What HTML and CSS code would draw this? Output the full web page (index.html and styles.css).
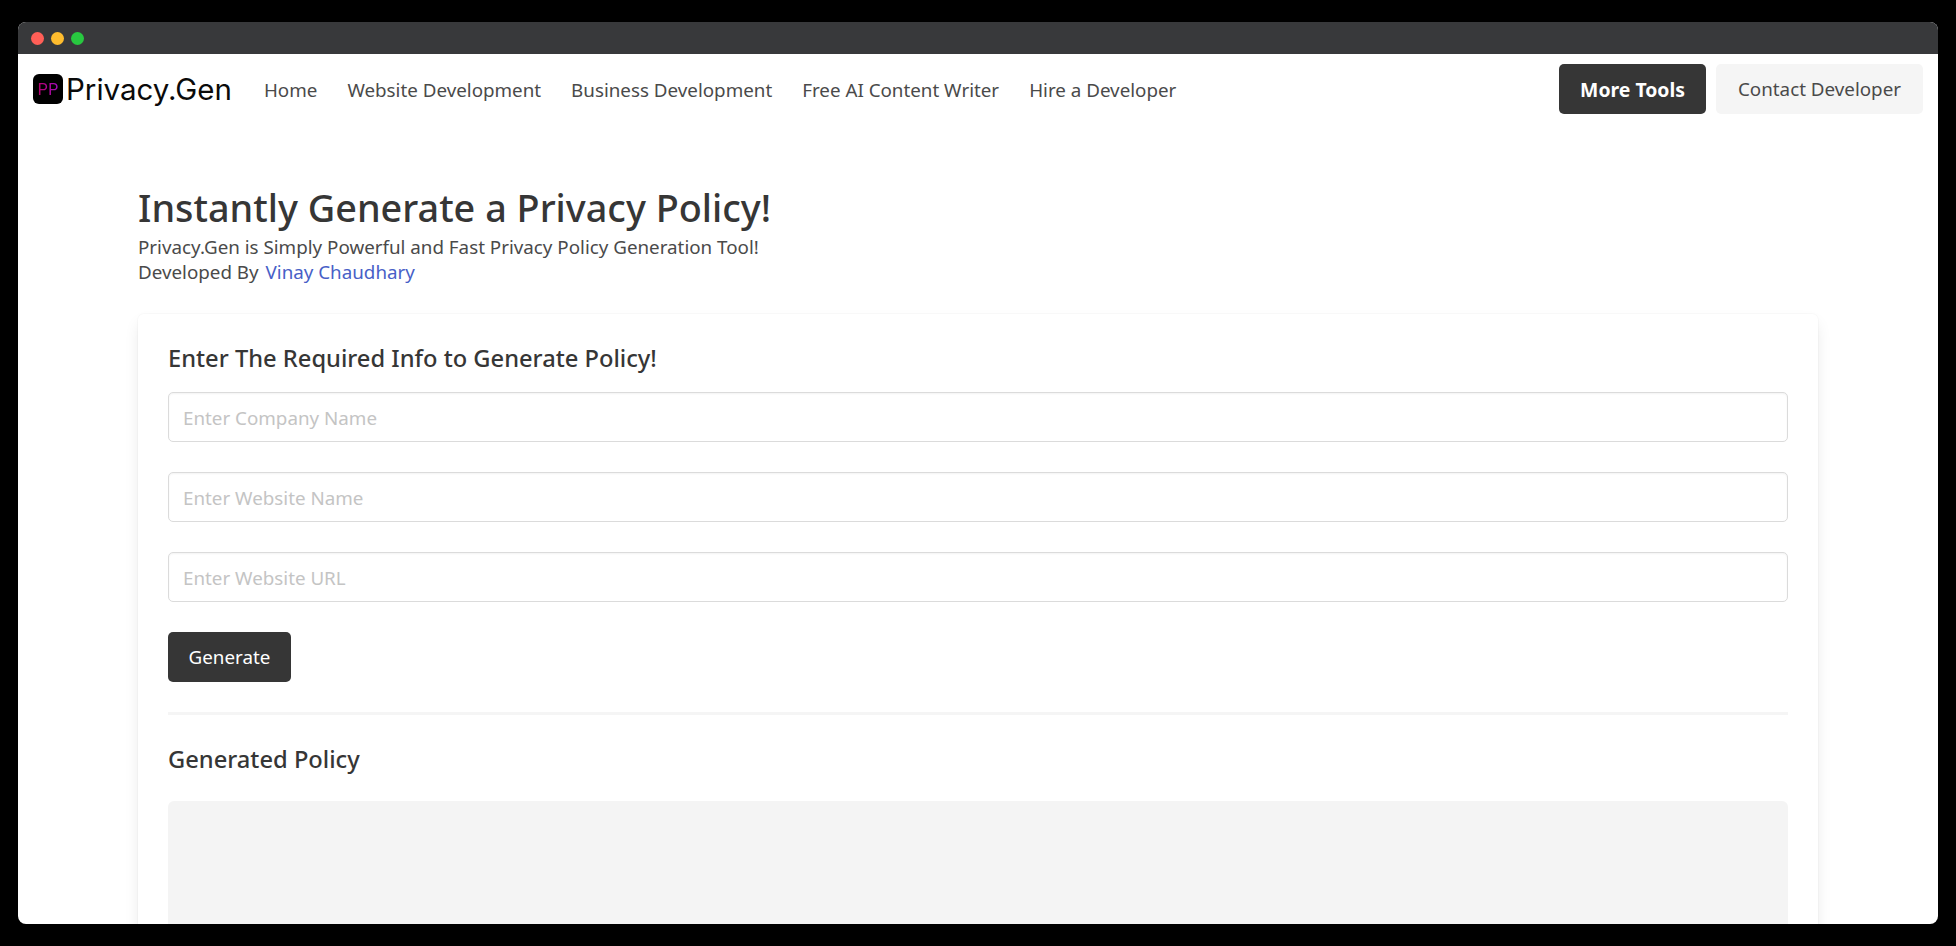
FILE: index.html
```html
<!DOCTYPE html>
<html lang="en">
<head>
<meta charset="utf-8">
<title>Privacy.Gen</title>
<link rel="stylesheet" href="styles.css">
</head>
<body>
<div class="window">
  <div class="titlebar">
    <span class="dot dot-red"></span><span class="dot dot-yellow"></span><span class="dot dot-green"></span>
  </div>
  <div class="page">
    <nav class="navbar">
      <a class="brand" href="#">
        <span class="logo"><span class="logo-text">PP</span></span>
        <span class="brand-name">Privacy.Gen</span>
      </a>
      <div class="nav-links">
        <a href="#">Home</a>
        <a href="#">Website Development</a>
        <a href="#">Business Development</a>
        <a href="#">Free AI Content Writer</a>
        <a href="#">Hire a Developer</a>
      </div>
      <div class="nav-actions">
        <a class="btn btn-dark btn-bold" href="#">More Tools</a>
        <a class="btn btn-light" href="#">Contact Developer</a>
      </div>
    </nav>
    <main class="container">
      <h1 class="title">Instantly Generate a Privacy Policy!</h1>
      <p class="subtitle">Privacy.Gen is Simply Powerful and Fast Privacy Policy Generation Tool!<br>Developed By <a href="#">Vinay Chaudhary</a></p>
      <section class="card">
        <h2 class="card-title">Enter The Required Info to Generate Policy!</h2>
        <form class="form">
          <input class="input" type="text" placeholder="Enter Company Name">
          <input class="input" type="text" placeholder="Enter Website Name">
          <input class="input" type="text" placeholder="Enter Website URL">
          <button class="btn btn-dark btn-generate" type="button">Generate</button>
        </form>
        <hr class="divider">
        <h2 class="card-title">Generated Policy</h2>
        <div class="output"></div>
      </section>
    </main>
  </div>
</div>
</body>
</html>
```
FILE: styles.css
```css
* { box-sizing: border-box; }
html, body { height: 100%; margin: 0; }
body {
  background: #000;
  padding: 22px 18px;
  font-family: "Noto Sans", "Open Sans", sans-serif;
  overflow: hidden;
}
.window {
  height: 902px;
  border-radius: 8px;
  overflow: hidden;
  display: flex;
  flex-direction: column;
  background: #fff;
}
.titlebar {
  flex: none;
  height: 32px;
  background: #38393b;
  display: flex;
  align-items: center;
  gap: 7px;
  padding: 0 0 0 13px;
}
.dot { width: 13px; height: 13px; border-radius: 50%; }
.dot-red { background: #ff5f57; }
.dot-yellow { background: #febc2e; }
.dot-green { background: #28c840; }
.page { flex: 1; overflow: hidden; }
.navbar {
  display: flex;
  align-items: center;
  height: 72px;
  padding: 0 15px;
}
.brand {
  display: flex;
  align-items: center;
  gap: 3px;
  margin-top: -2px;
  text-decoration: none;
  color: #0a0a0a;
}
.logo {
  width: 30px;
  height: 30px;
  border-radius: 6px;
  background: #000;
  display: flex;
  align-items: center;
  justify-content: center;
}
.logo-text {
  font-family: Inter, sans-serif;
  font-size: 16.5px;
  line-height: 1;
  background: linear-gradient(90deg, #b8006a, #a20cc0);
  -webkit-background-clip: text;
  background-clip: text;
  color: transparent;
}
.brand-name {
  font-family: Inter, sans-serif;
  font-size: 29.5px;
  line-height: 36px;
}
.nav-links {
  display: flex;
  gap: 30px;
  margin-left: 32px;
}
.nav-links a {
  color: #4a4a4a;
  text-decoration: none;
  font-size: 18.8px;
  line-height: 27px;
}
.nav-actions {
  display: flex;
  gap: 10px;
  margin-left: auto;
  margin-top: -2px;
}
.btn {
  display: inline-flex;
  align-items: center;
  justify-content: center;
  height: 50px;
  padding: 0 22px;
  border: 0;
  border-radius: 5px;
  font-family: inherit;
  font-size: 18.8px;
  text-decoration: none;
}
.btn-dark { background: #363636; color: #fff; }
.btn-bold { font-weight: 700; font-size: 19.4px; padding: 0 21px; }
.btn-light { background: #f5f5f5; color: #4a4a4a; }
.container {
  width: 1680px;
  margin: 0 auto;
  padding-top: 56px;
}
.title {
  margin: 0 0 1px;
  font-size: 37.8px;
  line-height: 52px;
  font-weight: 500;
  color: #363636;
}
.subtitle {
  margin: 0 0 29px;
  font-size: 18.8px;
  line-height: 25px;
  color: #4a4a4a;
}
.subtitle a { color: #485fc7; text-decoration: none; margin-left: 2px; }
.card {
  border-radius: 6px;
  background: #fff;
  padding: 30px;
  box-shadow: 0 8px 16px -2px rgba(10,10,10,.1), 0 0 0 1px rgba(10,10,10,.02);
}
.card-title {
  margin: 0;
  font-size: 23.7px;
  line-height: 28px;
  font-weight: 500;
  color: #363636;
}
.form {
  display: flex;
  flex-direction: column;
  align-items: flex-start;
  gap: 30px;
  margin-top: 20px;
}
.input {
  display: block;
  width: 100%;
  height: 50px;
  padding: 2px 14px 0;
  border: 1px solid #dbdbdb;
  border-radius: 5px;
  box-shadow: inset 0 1px 2px rgba(10,10,10,.05);
  font-family: inherit;
  font-size: 18.8px;
  color: #363636;
}
.input::placeholder { color: #c4c4c4; opacity: 1; }
.btn-generate { width: 123px; padding: 0; }
.divider {
  height: 3px;
  margin: 30px 0;
  border: 0;
  background: #f5f5f5;
}
.output {
  height: 300px;
  margin-top: 28px;
  border-radius: 6px;
  background: #f4f4f4;
}
```
